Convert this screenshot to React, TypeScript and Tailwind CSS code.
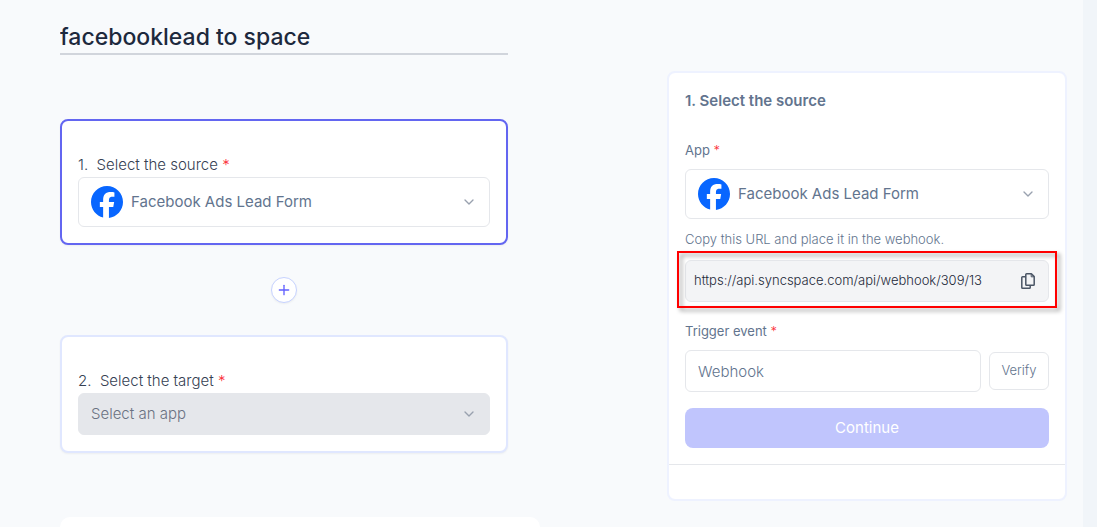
import React from 'react';
import { ChevronDown, Plus } from 'lucide-react';
import { SiFacebook } from 'react-icons/si';

function Required(): React.ReactNode {
  return <span className="font-light text-red-500">*</span>;
}

function CopyIcon(): React.ReactNode {
  return (
    <svg className="h-4 w-[14px]" viewBox="0 0 14 16" fill="none" stroke="currentColor" strokeWidth="1.5" strokeLinejoin="round">
      <path d="M5.6 0.8H10.4L13.2 3.6V11.4A0.8 0.8 0 0 1 12.4 12.2H5.6A0.8 0.8 0 0 1 4.8 11.4V1.6A0.8 0.8 0 0 1 5.6 0.8Z" />
      <path d="M10.2 1V3.8H13" strokeWidth="1" />
      <path d="M4.8 3.8H1.6A0.8 0.8 0 0 0 0.8 4.6V14.4A0.8 0.8 0 0 0 1.6 15.2H8.4A0.8 0.8 0 0 0 9.2 14.4V12.2" />
    </svg>
  );
}

function AppSelect({ id }: { id: string }): React.ReactNode {
  return (
    <div className="relative">
      <SiFacebook className="pointer-events-none absolute left-3 top-2 m-px size-8 text-[#0866ff]" />
      <select
        id={id}
        className="block h-[50px] w-full appearance-none rounded-md border border-gray-200 bg-white pl-13 pr-10 text-[15px] text-slate-500"
      >
        <option>Facebook Ads Lead Form</option>
      </select>
      <ChevronDown className="pointer-events-none absolute right-[13px] top-[17px] size-4 text-gray-400" />
    </div>
  );
}

function SourceStep(): React.ReactNode {
  return (
    <section className="rounded-lg border-2 border-[#6366f1] bg-white px-4 pb-4 pt-8 shadow-xs">
      <label htmlFor="source-app" className="block text-[15px] font-light leading-6 text-gray-700">
        1.&nbsp; Select the source <Required />
      </label>
      <AppSelect id="source-app" />
    </section>
  );
}

function TargetStep(): React.ReactNode {
  return (
    <section className="rounded-lg border-2 border-indigo-100 bg-white px-4 pb-4 pt-8 shadow-xs">
      <label htmlFor="target-app" className="block text-[15px] font-light leading-6 text-gray-700">
        2.&nbsp; Select the target <Required />
      </label>
      <div className="relative">
        <select
          id="target-app"
          disabled
          className="block h-[42px] w-full appearance-none rounded-md border border-gray-200 bg-gray-200 px-3 text-[15px] font-light text-gray-500 opacity-100"
        >
          <option>Select an app</option>
        </select>
        <ChevronDown className="pointer-events-none absolute right-[13px] top-[13px] size-4 text-gray-400" />
      </div>
    </section>
  );
}

function SourcePanel(): React.ReactNode {
  return (
    <aside className="w-full self-start rounded-lg border-2 border-indigo-50 bg-white">
      <div className="p-4">
        <h2 className="text-[15px] font-semibold leading-6 text-slate-500">1. Select the source</h2>

        <label htmlFor="panel-app" className="mb-[9px] mt-[27px] block text-[13px] leading-5 text-slate-500">
          App <Required />
        </label>
        <AppSelect id="panel-app" />

        <p className="mt-[10px] text-[13px] font-light leading-5 text-slate-500">
          Copy this URL and place it in the webhook.
        </p>
        <div className="relative mt-[11px] flex h-[42px] items-center rounded-md border border-gray-200 bg-gray-100 pl-2 pr-[13px]">
          <input
            aria-label="Webhook URL"
            readOnly
            defaultValue="https://api.syncspace.com/api/webhook/309/13"
            className="min-w-0 flex-1 bg-transparent text-[13px] font-light text-gray-800 outline-none"
          />
          <button type="button" aria-label="Copy URL" className="text-gray-600">
            <CopyIcon />
          </button>
          <div className="pointer-events-none absolute -inset-x-[9px] -bottom-[7px] -top-[10px] border-2 border-[#ff0000] drop-shadow-[3px_3px_2px_rgba(0,0,0,0.4)]" />
        </div>

        <label htmlFor="trigger-event" className="mb-[9px] mt-[19px] block text-[13px] leading-5 text-slate-500">
          Trigger event <Required />
        </label>
        <div className="flex items-center gap-2">
          <input
            id="trigger-event"
            defaultValue="Webhook"
            className="h-[42px] min-w-0 flex-1 rounded-md border border-gray-200 px-3 text-[15px] font-light text-slate-500"
          />
          <button type="button" className="h-[38px] w-[60px] rounded-md border border-gray-200 text-[13px] font-light text-slate-500">
            Verify
          </button>
        </div>

        <button type="button" className="mt-4 h-10 w-full rounded-lg bg-[#c0c5fd] text-[15px] text-white">
          Continue
        </button>
      </div>
      <div className="h-[35px] border-t border-gray-200" />
    </aside>
  );
}

export default function App(): React.ReactNode {
  return (
    <div className="flex min-h-screen bg-slate-100 font-['Inter',sans-serif]">
      <main className="mr-[14px] flex flex-1 justify-between gap-8 bg-slate-50 pl-[60px] pr-4">
        <div className="flex w-full max-w-md flex-col pt-[21px]">
          <input
            aria-label="Flow name"
            defaultValue="facebooklead to space"
            className="mb-16 h-[34px] w-full border-b-2 border-gray-300 bg-transparent text-[23px] font-medium text-slate-800"
          />
          <SourceStep />
          <button
            type="button"
            aria-label="Add step"
            className="my-8 flex size-[26px] items-center justify-center self-center rounded-full border border-indigo-200 bg-white text-indigo-500 shadow-xs"
          >
            <Plus className="size-4" strokeWidth={2} />
          </button>
          <TargetStep />
          <div className="-mr-8 mt-16 min-h-[10px] flex-1 rounded-t-[20px] bg-white" />
        </div>
        <div className="flex w-full max-w-[400px] pt-[71px]">
          <SourcePanel />
        </div>
      </main>
    </div>
  );
}
